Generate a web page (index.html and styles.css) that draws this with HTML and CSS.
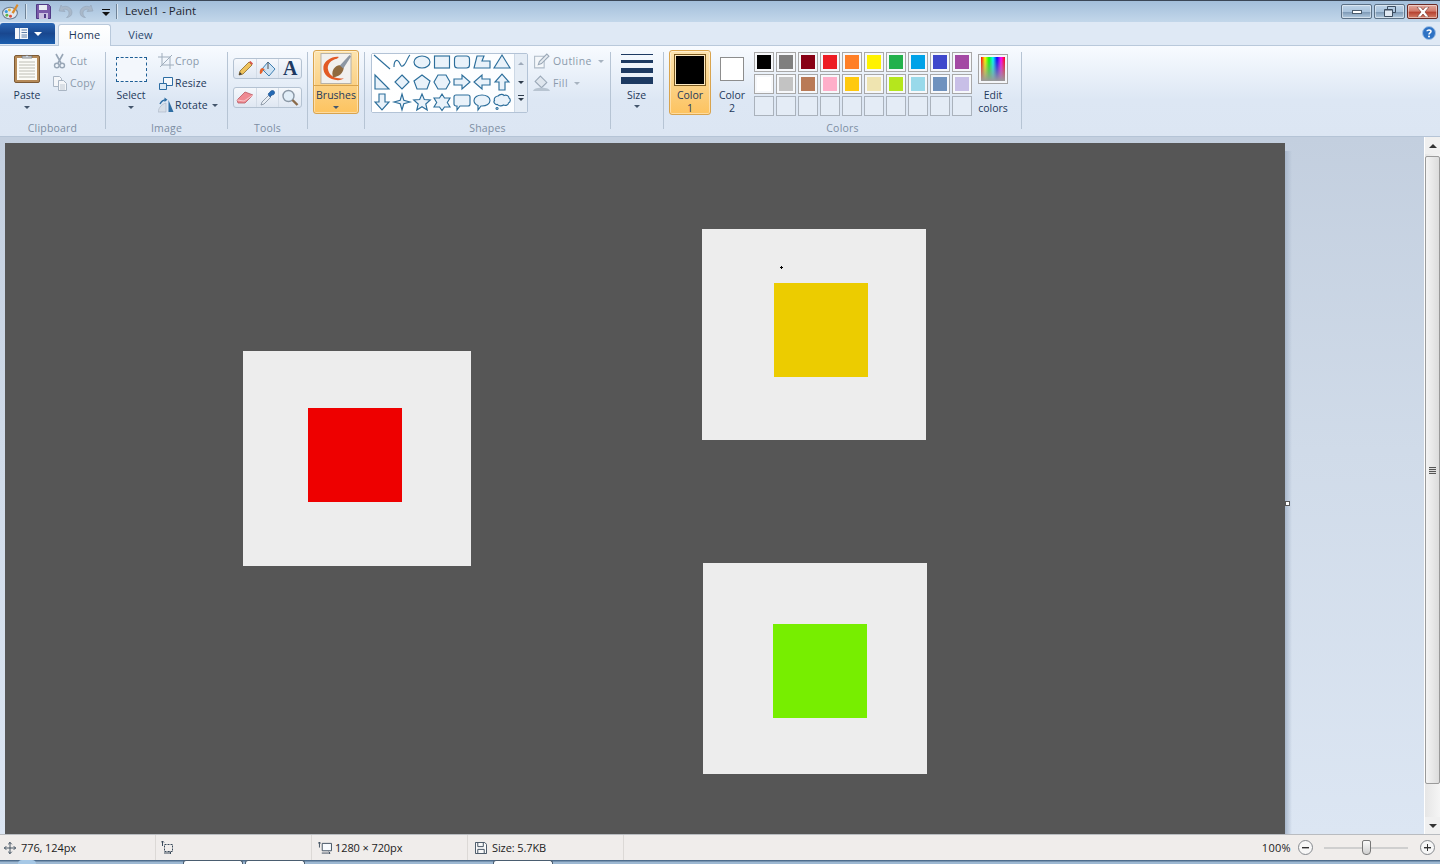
FILE: index.html
```html
<!DOCTYPE html>
<html lang="en">
<head>
<meta charset="utf-8">
<title>Level1 - Paint</title>
<link rel="stylesheet" href="styles.css">
</head>
<body>
<div class="window">
  <header class="titlebar">
    <svg class="qa qa-app" viewBox="0 0 16 16"><ellipse cx="7.500" cy="9.500" rx="7" ry="5.500" fill="#dfe6ee" stroke="#6d7f92"/><circle cx="4" cy="8" r="1.500" fill="#3a9bdc"/><circle cx="7" cy="6.600" r="1.400" fill="#e8b93a"/><circle cx="4.600" cy="11.600" r="1.400" fill="#5fb548"/><circle cx="8" cy="12.400" r="1.400" fill="#d9503f"/><path d="M9 9L14 1l1.500 1L11 10z" fill="#d98a2c"/></svg>
    <span class="qa-sep qa-sep-a"></span>
    <svg class="qa qa-save" viewBox="0 0 15 15"><path d="M.5.5h12l2 2v12H.5z" fill="#7a5aa8" stroke="#4f3a86"/><path d="M3 1h8v5H3z" fill="#e8ecf3"/><path d="M3 9h9v6H3z" fill="#c9bfe0"/><path d="M8 10h2v4H8z" fill="#4f3a86"/></svg>
    <svg class="qa qa-undo" viewBox="0 0 15 15"><path d="M3 1L1 7l6 .5L5.400 5.600C8 4.600 11 6 11 9c0 2-1 3.500-2.500 4.500 3.500 0 5.500-2.500 5.500-5C14 3.500 8 1 4.500 3z" fill="#a9b8c9" stroke="#94a5b8" stroke-width=".6"/></svg>
    <svg class="qa qa-redo" viewBox="0 0 15 15"><path d="M12 1l2 6-6 .5 1.600-1.900C7 4.600 4 6 4 9c0 2 1 3.500 2.500 4.500C3 13.500 1 11 1 8.500 1 3.500 7 1 10.500 3z" fill="#a9b8c9" stroke="#94a5b8" stroke-width=".6"/></svg>
    <svg class="qa qa-more" viewBox="0 0 8 8"><path d="M0 1h8v1H0z" fill="#111"/><path d="M0 4h8L4 8z" fill="#111"/></svg>
    <span class="qa-sep qa-sep-b"></span>
    <span class="doc-title">Level1 - Paint</span>
    <div class="winbtns">
      <button class="winbtn"><span class="glyph-min"></span></button>
      <button class="winbtn"><svg class="glyph-restore" viewBox="0 0 12 11"><path d="M3.500.5h8v6h-8z" fill="none" stroke="#3c4d60"/><path d="M.5 3.500h8v7h-8z" fill="#dfe8f2" stroke="#3c4d60"/><path d="M1 3h7v1.500H1z" fill="#3c4d60"/></svg></button>
      <button class="winbtn winbtn-close"><svg class="glyph-close" viewBox="0 0 14 10"><path d="M1 0h3.500L7 3l2.500-3H13L9 5l4 5H9.500L7 7l-2.500 3H1l4-5z" fill="#fff" stroke="#6d3028" stroke-width=".6"/></svg></button>
    </div>
  </header>

  <nav class="tabs">
    <button class="appmenu">
      <svg class="appmenu-doc" viewBox="0 0 13 11"><path d="M0 0h13v11H0z" fill="#f4f7fb"/><path d="M4 0h1v11H4z" fill="#7f9cc0"/><path d="M6.500 2H12M6.500 4.500H12M6.500 7H12M6.500 9H12" stroke="#5d7ea8"/></svg>
      <span class="appmenu-caret"></span>
    </button>
    <span class="tab tab-active">Home</span>
    <span class="tab">View</span>
    <svg class="help" viewBox="0 0 14 14"><circle cx="7" cy="7" r="6.500" fill="#2e72c4" stroke="#9fc0e6"/><path d="M5 5.200C5 3.700 9 3.500 9 5.500 9 7 7 6.800 7 8.500" fill="none" stroke="#fff" stroke-width="1.500"/><circle cx="7" cy="10.500" r="1" fill="#fff"/></svg>
  </nav>

  <section class="ribbon">
    <div class="group g-clipboard">
      <div class="body">
        <div class="bigbtn paste">
          <svg class="paste-icon" viewBox="0 0 26 30"><rect x=".5" y="2.500" width="25" height="27" rx="1.500" fill="#b58a58" stroke="#7d5a34"/><rect x="3" y="5" width="20" height="22" fill="#fbfbf7"/><path d="M5 9h16M5 12h16M5 15h16M5 18h16M5 21h16M5 24h16" stroke="#bdbdb4"/><path d="M8 5V3h3.500a2 2 0 0 1 3 0H18v2z" fill="#d8dde2" stroke="#6f7478" stroke-width=".8"/></svg>
          <span class="biglabel">Paste</span>
          <span class="caret"></span>
        </div>
        <div class="list">
          <div class="item off"><svg class="ic" viewBox="0 0 16 16"><path d="M4 1l5 9M11 1L6 10" stroke="#98a6b6" stroke-width="1.600" fill="none"/><circle cx="4.800" cy="12.500" r="2.300" fill="none" stroke="#98a6b6" stroke-width="1.400"/><circle cx="10.200" cy="12.500" r="2.300" fill="none" stroke="#98a6b6" stroke-width="1.400"/></svg><span>Cut</span></div>
          <div class="item off"><svg class="ic" viewBox="0 0 16 16"><path d="M1.500 1.500h6l2 2v8h-8z" fill="#f4f6f9" stroke="#a9b5c3"/><path d="M6.500 5.500h5l3 3v7h-8z" fill="#f4f6f9" stroke="#a9b5c3"/><path d="M8 10h5M8 12h5M8 14h5" stroke="#c0c9d3"/></svg><span>Copy</span></div>
        </div>
      </div>
      <div class="label">Clipboard</div>
    </div>

    <div class="group g-image">
      <div class="body">
        <div class="bigbtn select">
          <span class="select-icon"></span>
          <span class="biglabel">Select</span>
          <span class="caret"></span>
        </div>
        <div class="list">
          <div class="item off"><svg class="ic" viewBox="0 0 16 16"><path d="M4 0v12h12M0 4h12v12M2 14L14 2" fill="none" stroke="#9fadbc"/></svg><span>Crop</span></div>
          <div class="item"><svg class="ic" viewBox="0 0 16 16"><path d="M5.500 2.500h9v8h-9z" fill="#f4f8fc" stroke="#2d6da3"/><path d="M1.500 8.500h7v6h-7z" fill="#dceaf6" stroke="#2d6da3"/></svg><span>Resize</span></div>
          <div class="item"><svg class="ic" viewBox="0 0 16 16"><path d="M0 15C1 10 4 7 8 6v9z" fill="#d7dfe8" stroke="#a8b4c2" stroke-width=".6"/><path d="M10.500 3L15.500 15H10.500z" fill="#2d6da3"/><path d="M2 7C3.500 4 5 3 8 2.800" fill="none" stroke="#2d6da3" stroke-width="1.400"/><path d="M6.500 0.500l3 2.300-3 2.200z" fill="#2d6da3"/></svg><span>Rotate</span><span class="drop"></span></div>
        </div>
      </div>
      <div class="label">Image</div>
    </div>

    <div class="group g-tools">
      <div class="body toolrows">
        <div class="toolrow">
          <span class="tool"><svg class="ic-tool" viewBox="0 0 18 18"><path d="M4 11L13 2l3 3-9 9-4 1z" fill="#eec25c" stroke="#8d6c2c" stroke-width=".8"/><path d="M13 2l3 3 1-1.500L14.500 1z" fill="#d9574c"/><path d="M3 15l.8-3 2.200 2.200z" fill="#333"/></svg></span>
          <span class="tool"><svg class="ic-tool" viewBox="0 0 18 18"><path d="M9 2l7 7-6 7-7-7z" fill="#cfe3f4" stroke="#3f7fb0"/><path d="M9 2v7" stroke="#555"/><path d="M4 8C1 8 .5 11 1 14c1.500 0 3-2 3-4 1 0 2 0 3 1z" fill="#e4632c"/></svg></span>
          <span class="tool tool-a">A</span>
        </div>
        <div class="toolrow">
          <span class="tool"><svg class="ic-tool" viewBox="0 0 18 18"><path d="M1 11l8-8 8 3-8 8-7 0z" fill="#ef8a92" stroke="#b85a63" stroke-width=".8"/><path d="M1 11l7 1 9-6" fill="none" stroke="#f7c4c8"/></svg></span>
          <span class="tool"><svg class="ic-tool" viewBox="0 0 18 18"><path d="M2 16l1-3 7-7 2 2-7 7z" fill="#e9eef4" stroke="#7f8c9a" stroke-width=".8"/><path d="M9 5l2-2c1-2 4-2 4.500 0 .5 2-1 3-2.500 3l-2 2z" fill="#2469b4" stroke="#1c4f88" stroke-width=".6"/></svg></span>
          <span class="tool"><svg class="ic-tool" viewBox="0 0 18 18"><circle cx="7.500" cy="7" r="5.500" fill="#e2eef8" stroke="#8b98a6" stroke-width="1.400"/><path d="M11.500 11l5 5" stroke="#8a6a4a" stroke-width="2.400"/></svg></span>
        </div>
      </div>
      <div class="label">Tools</div>
    </div>

    <div class="group g-brushes">
      <div class="body">
        <div class="hot brushes">
          <div class="brushes-top">
            <svg class="brush-icon" viewBox="0 0 32 32"><rect x=".5" y=".5" width="31" height="31" fill="#f1f0ee" stroke="#b5b0a6"/><path d="M19 4C12 3 4 8 3 14c-1 8 6 14 15 14 3 0 5-1 6-2-6 1-14-1-16-8C6 12 11 7 17 6z" fill="#e25a25"/><path d="M13 25c-2-5 0-10 5-12 3-1 5 0 6 2 0 5-5 10-11 10z" fill="#8f6a3e"/><path d="M20 13L30 2l1.500 1.500L23.500 16z" fill="#8c96a2"/></svg>
          </div>
          <span class="biglabel">Brushes</span>
          <span class="caret"></span>
        </div>
      </div>
    </div>

    <div class="group g-shapes">
      <div class="body">
        <div class="gallery">
          <div class="shapes">
            <svg class="shape" viewBox="0 0 18 18"><path d="M1 2l16 14"/></svg>
            <svg class="shape" viewBox="0 0 18 18"><path d="M1 14c0-7 3-8 5-5s2 6 5 3 4-9 6-10" class="nofill"/></svg>
            <svg class="shape" viewBox="0 0 18 18"><ellipse cx="9" cy="9" rx="8" ry="6"/></svg>
            <svg class="shape" viewBox="0 0 18 18"><rect x="1.500" y="3" width="15" height="12"/></svg>
            <svg class="shape" viewBox="0 0 18 18"><rect x="1.500" y="3" width="15" height="12" rx="3"/></svg>
            <svg class="shape" viewBox="0 0 18 18"><path d="M1 15l3-12h7l-2 5h8v7z"/></svg>
            <svg class="shape" viewBox="0 0 18 18"><path d="M9 2l8 13H1z"/></svg>

            <svg class="shape" viewBox="0 0 18 18"><path d="M2 2l14 14H2z"/></svg>
            <svg class="shape" viewBox="0 0 18 18"><path d="M9 2l7 7-7 7-7-7z"/></svg>
            <svg class="shape" viewBox="0 0 18 18"><path d="M9 2l8 6-3 8H4L1 8z"/></svg>
            <svg class="shape" viewBox="0 0 18 18"><path d="M5 2h8l4 7-4 7H5L1 9z"/></svg>
            <svg class="shape" viewBox="0 0 18 18"><path d="M1 6h8V2l8 7-8 7v-4H1z"/></svg>
            <svg class="shape" viewBox="0 0 18 18"><path d="M17 6H9V2L1 9l8 7v-4h8z"/></svg>
            <svg class="shape" viewBox="0 0 18 18"><path d="M6 17V9H2l7-8 7 8h-4v8z"/></svg>

            <svg class="shape" viewBox="0 0 18 18"><path d="M6 1v8H2l7 8 7-8h-4V1z"/></svg>
            <svg class="shape" viewBox="0 0 18 18"><path d="M9 1l1.800 6.200L17 9l-6.200 1.800L9 17l-1.800-6.200L1 9l6.200-1.800z"/></svg>
            <svg class="shape" viewBox="0 0 18 18"><path d="M9 1l2.300 5.500 6 .5-4.500 4 1.400 6L9 13.800 3.800 17l1.400-6L.7 7l6-.5z"/></svg>
            <svg class="shape" viewBox="0 0 18 18"><path d="M9 1l2.500 4H17l-2.700 4.500L17 14h-5.500L9 17.500 6.500 14H1l2.700-4.500L1 5h5.500z"/></svg>
            <svg class="shape" viewBox="0 0 18 18"><path d="M3 2h12a2 2 0 0 1 2 2v7a2 2 0 0 1-2 2H7l-3 4v-4H3a2 2 0 0 1-2-2V4a2 2 0 0 1 2-2z"/></svg>
            <svg class="shape" viewBox="0 0 18 18"><path d="M9 2c4.500 0 8 2.300 8 5.500S13.500 13 9 13H8l-3 4v-4.500C2.500 11.500 1 9.700 1 7.500 1 4.300 4.500 2 9 2z"/></svg>
            <svg class="shape" viewBox="0 0 18 18"><path d="M5 3c2-2 5-2 6-.5 2-1 5 0 5 2.500 2 1 1.500 4.500-.5 5 0 2-3 3-5 2-2 1.500-5 1-6-.5C2 12 0 9 1.500 7.500.5 5 3 3 5 3zM4 14.500a1 1 0 1 0 .1 0z"/></svg>
          </div>
          <div class="gal-scroll">
            <span class="gal-up"></span>
            <span class="gal-down"></span>
            <span class="gal-more"></span>
          </div>
        </div>
        <div class="list list-shape">
          <div class="item off"><svg class="ic" viewBox="0 0 16 16"><path d="M1.500 3.500h9v11h-9z" transform="translate(0 -.5)" fill="#f4f7fa" stroke="#aebac7"/><path d="M5 11l1-3 7-7 2 2-7 7z" fill="#e6ebf1" stroke="#9aa8b7"/></svg><span>Outline</span><span class="drop drop-off"></span></div>
          <div class="item off"><svg class="ic" viewBox="0 0 16 16"><path d="M7 1l6 6-5 5-6-6z" fill="#dfe6ee" stroke="#9aa8b7"/><path d="M0 15c1-2 3-3 8-3s7 1 8 3z" fill="#b8c4d1"/></svg><span>Fill</span><span class="drop drop-off"></span></div>
        </div>
      </div>
      <div class="label">Shapes</div>
    </div>

    <div class="group g-size">
      <div class="body">
        <div class="bigbtn sizebtn">
          <div class="lines"><i class="l1"></i><i class="l2"></i><i class="l3"></i><i class="l4"></i></div>
          <span class="biglabel">Size</span>
          <span class="caret"></span>
        </div>
      </div>
    </div>

    <div class="group g-colors">
      <div class="body">
        <div class="hot colorbtn">
          <span class="chip chip-1"></span>
          <span class="biglabel two">Color<br>1</span>
        </div>
        <div class="colorbtn">
          <span class="chip chip-2"></span>
          <span class="biglabel two">Color<br>2</span>
        </div>
        <div class="palette">
          <span class="sw"><i class="c1"></i></span><span class="sw"><i class="c2"></i></span><span class="sw"><i class="c3"></i></span><span class="sw"><i class="c4"></i></span><span class="sw"><i class="c5"></i></span><span class="sw"><i class="c6"></i></span><span class="sw"><i class="c7"></i></span><span class="sw"><i class="c8"></i></span><span class="sw"><i class="c9"></i></span><span class="sw"><i class="c10"></i></span>
          <span class="sw"><i class="c11"></i></span><span class="sw"><i class="c12"></i></span><span class="sw"><i class="c13"></i></span><span class="sw"><i class="c14"></i></span><span class="sw"><i class="c15"></i></span><span class="sw"><i class="c16"></i></span><span class="sw"><i class="c17"></i></span><span class="sw"><i class="c18"></i></span><span class="sw"><i class="c19"></i></span><span class="sw"><i class="c20"></i></span>
          <span class="sw sw-e"></span><span class="sw sw-e"></span><span class="sw sw-e"></span><span class="sw sw-e"></span><span class="sw sw-e"></span><span class="sw sw-e"></span><span class="sw sw-e"></span><span class="sw sw-e"></span><span class="sw sw-e"></span><span class="sw sw-e"></span>
        </div>
        <div class="editcolors">
          <span class="rainbow"></span>
          <span class="biglabel two">Edit<br>colors</span>
        </div>
      </div>
      <div class="label">Colors</div>
    </div>
  </section>

  <main class="work">
    <div class="canvas-area">
      <div class="canvas">
        <div class="card card-a"></div>
        <div class="square sq-red"></div>
        <div class="card card-b"></div>
        <div class="square sq-yellow"></div>
        <div class="cursor-dot"></div>
        <div class="card card-c"></div>
        <div class="square sq-green"></div>
      </div>
      <span class="canvas-shadow"></span>
      <span class="handle"></span>
    </div>
    <aside class="scrollbar">
      <span class="sb-btn"><i class="arrow-up"></i></span>
      <span class="sb-thumb"><i class="grip"></i></span>
      <span class="sb-btn"><i class="arrow-down"></i></span>
    </aside>
  </main>

  <footer class="status">
    <div class="cell"><svg class="ic-status" viewBox="0 0 13 13"><path d="M6.500 0v13M0 6.500h13" stroke="#3a4a5a" fill="none"/><path d="M4.500 2.500l2-2 2 2M4.500 10.500l2 2 2-2M2.500 4.500l-2 2 2 2M10.500 4.500l2 2-2 2" stroke="#3a4a5a" fill="none"/></svg><span>776, 124px</span></div>
    <div class="cell"><svg class="ic-status ic-sel" viewBox="0 0 14 13"><path d="M3.500 3.500h8v7h-8z" fill="none" stroke="#3a4a5a" stroke-dasharray="2 1"/><path d="M1.500 0v5M0 1.500l1.500-1.500 1.500 1.500M3 12h7M8.500 10.500L10 12l-1.500 1.500" stroke="#3a4a5a" fill="none"/></svg></div>
    <div class="cell"><svg class="ic-status ic-wide" viewBox="0 0 15 13"><path d="M4.500 1.500h10v8h-10z" fill="#f8fbfe" stroke="#3a4a5a"/><path d="M1.500 0v6M0 1.500L1.500 0 3 1.500M4 12h9M11.500 10.500L13 12l-1.500 1.500" stroke="#3a4a5a" fill="none"/></svg><span>1280 × 720px</span></div>
    <div class="cell"><svg class="ic-status" viewBox="0 0 13 13"><path d="M.5.500h10l2 2v10H.5z" fill="#f8f8f8" stroke="#3a4a5a"/><path d="M3 1v4h6V1M3 12V8h7v4" fill="none" stroke="#3a4a5a"/></svg><span>Size: 5.7KB</span></div>
    <div class="cell cell-last"></div>
    <div class="zoom">
      <span class="zoom-val">100%</span>
      <span class="zoom-btn"><i class="minus"></i></span>
      <span class="slider"><i class="slider-thumb"></i></span>
      <span class="zoom-btn"><i class="minus"></i><i class="plusv"></i></span>
    </div>
  </footer>

  <div class="taskbar">
    <span class="orb"></span>
    <span class="tb tb-1"></span>
    <span class="tb tb-2"></span>
    <span class="tb tb-3"></span>
  </div>
</div>
</body>
</html>
```

FILE: styles.css
```css
* { box-sizing: border-box; }
html, body { margin: 0; padding: 0; height: 100%; overflow: hidden; }
body { font-family: "Open Sans", "Noto Sans", sans-serif; font-size: 11px; color: #1e395b; }
button { padding: 0; margin: 0; font: inherit; }

.window { width: 1440px; height: 864px; display: flex; flex-direction: column; overflow: hidden; }

/* title bar */
.titlebar { height: 22px; flex: none; display: flex; align-items: center; border-top: 1px solid #3b4757; background: linear-gradient(#a3bfdb, #c3d7ea); }
.qa { display: block; flex: none; }
.qa-app { width: 17px; height: 17px; margin-left: 2px; }
.qa-sep { width: 1px; height: 15px; background: #6f8296; box-shadow: 1px 0 0 #dbe7f2; flex: none; }
.qa-sep-a { margin-left: 6px; }
.qa-save { width: 15px; height: 15px; margin-left: 10px; }
.qa-undo { width: 15px; height: 15px; margin-left: 7px; }
.qa-redo { width: 15px; height: 15px; margin-left: 6px; }
.qa-more { width: 8px; height: 8px; margin-left: 8px; }
.qa-sep-b { margin-left: 6px; }
.doc-title { margin-left: 8px; margin-top: -2px; font-size: 11.500px; color: #1c2530; line-height: 20px; }
.winbtns { margin-left: auto; margin-right: 2px; display: flex; gap: 2px; }
.winbtn { width: 31px; height: 15px; display: flex; align-items: center; justify-content: center; border: 1px solid #5c7186; border-radius: 2px; background: linear-gradient(#bed3e7 0, #a9c3dc 50%, #7e9ab6 55%, #b3cbe0 100%); box-shadow: inset 0 0 0 1px rgba(255,255,255,.45); }
.winbtn-close { border-color: #6a2a25; background: linear-gradient(#e0a99e 0, #d27a6a 48%, #b5402f 54%, #d47f68 100%); }
.glyph-min { width: 10px; height: 4px; background: #fff; border: 1px solid #4a5b6c; }
.glyph-restore { width: 12px; height: 11px; display: block; }
.glyph-close { width: 14px; height: 10px; display: block; }

/* tabs */
.tabs { height: 24px; flex: none; display: flex; align-items: flex-end; background: #dfe9f5; border-bottom: 1px solid #b9c9db; position: relative; }
.appmenu { width: 55px; height: 21px; margin-bottom: 1px; border: none; border-radius: 3px 3px 0 0; background: linear-gradient(#2a66b4 0, #19478f 50%, #1c5fae 100%); display: flex; align-items: center; justify-content: center; gap: 6px; padding-left: 2px; }
.appmenu-doc { width: 13px; height: 11px; display: block; }
.appmenu-caret { width: 0; height: 0; border: 4px solid transparent; border-top: 4px solid #fff; border-bottom: 0; }
.tab { height: 22px; width: 53px; margin-left: 3px; display: flex; align-items: center; justify-content: center; font-size: 11px; color: #2c4a70; letter-spacing: .1px; }
.tab-active { position: relative; top: 1px; padding-bottom: 2px; background: linear-gradient(#fff, #f7fafd); border: 1px solid #b9c9db; border-bottom: none; border-radius: 3px 3px 0 0; color: #1e395b; }
.help { position: absolute; right: 4px; top: 4px; width: 14px; height: 14px; }

/* ribbon */
.ribbon { height: 91px; flex: none; display: flex; padding-top: 4px; background: linear-gradient(#f8fbff 0, #dde7f4 60%, #dce6f3 100%); border-bottom: 1px solid #b5c4d6; }
.group { position: relative; flex: none; display: flex; flex-direction: column; }
.group::after { content: ""; position: absolute; right: 0; top: 2px; bottom: 7px; width: 1px; background: #b6c4d4; }
.body { height: 66px; display: flex; }
.label { margin-top: 5px; height: 14px; line-height: 14px; font-size: 10.500px; text-align: center; color: #7c8ea3; letter-spacing: .2px; padding-right: 1px; }
.g-clipboard { width: 106px; }
.g-clipboard .body { padding-left: 8px; gap: 6px; }
.g-image { width: 122px; }
.g-image .body { padding-left: 8px; gap: 10px; }
.g-image .item { gap: 1px; letter-spacing: .15px; }
.g-tools { width: 80px; }
.g-brushes { width: 57px; }
.g-shapes { width: 246px; }
.g-size { width: 53px; }
.g-colors { width: 358px; }

.bigbtn { display: flex; flex-direction: column; align-items: center; }
.biglabel { font-size: 10.500px; line-height: 13px; color: #1e395b; text-align: center; }
.two { line-height: 13px; }
.caret { display: block; width: 0; height: 0; margin-top: 4px; border: 3px solid transparent; border-top: 3px solid #44566c; border-bottom: 0; }
.paste { width: 38px; }
.paste-icon { width: 26px; height: 30px; margin-top: 3px; margin-bottom: 6px; display: block; }
.select { width: 34px; }
.select-icon { display: block; width: 31px; height: 25px; margin-top: 7px; margin-bottom: 7px; border: 1px dashed #1f5f96; background: #f3f7fc; }
.list { display: flex; flex-direction: column; }
.item { height: 22px; display: flex; align-items: center; gap: 2px; font-size: 10.500px; white-space: nowrap; color: #1e395b; letter-spacing: .15px; }
.item.off { color: #8b9aab; }
.ic { width: 16px; height: 16px; display: block; flex: none; }
.drop { width: 0; height: 0; margin-left: 3px; border: 3px solid transparent; border-top: 3px solid #44566c; border-bottom: 0; }
.drop-off { border-top-color: #a7b3c0; }

/* tools */
.toolrows { flex-direction: column; gap: 8px; padding: 8px 0 0 5px; }
.toolrow { width: 69px; height: 21px; display: flex; border: 1px solid #b4c2d2; border-radius: 3px; background: linear-gradient(#f5f8fc, #dfe7f2); }
.tool { flex: 1; display: flex; align-items: center; justify-content: center; border-right: 1px solid #d3dce7; }
.tool:last-child { border-right: none; }
.ic-tool { width: 18px; height: 18px; display: block; }
.tool-a { font-family: "Liberation Serif", serif; font-weight: 700; font-size: 20px; line-height: 19px; color: #1d3a62; }

/* brushes & hot */
.g-brushes .body { padding-left: 5px; }
.hot { border: 1px solid #d9a44e; border-radius: 3px; background: linear-gradient(#fde4ae 0, #fbd389 50%, #fdc35f 100%); box-shadow: inset 0 0 0 1px rgba(255,255,255,.4); display: flex; flex-direction: column; align-items: center; }
.brushes { width: 46px; height: 64px; }
.brushes-top { width: 100%; height: 35px; display: flex; justify-content: center; align-items: center; border-bottom: 1px solid #d9a44e; }
.brush-icon { width: 32px; height: 31px; display: block; }
.brushes .biglabel { margin-top: 3px; }

/* shapes */
.g-shapes .body { padding: 3px 0 0 6px; gap: 6px; }
.gallery { width: 157px; height: 60px; display: flex; border: 1px solid #b3c3d6; border-radius: 2px; background: #f1f5fa; }
.shapes { width: 142px; display: grid; grid-template-columns: repeat(7, 20px); grid-auto-rows: 20px; align-content: start; justify-content: start; background: linear-gradient(90deg, #fff, #fbfdff); }
.shape { width: 18px; height: 18px; margin: -1px 1px 0 1px; fill: #e9f2fa; stroke: #2c6e9b; stroke-width: 1.150; display: block; overflow: visible; }
.shape .nofill { fill: none; }
.gal-scroll { flex: 1; display: flex; flex-direction: column; align-items: center; border-left: 1px solid #ccd8e5; background: #e4ecf5; }
.gal-up, .gal-down, .gal-more { display: block; width: 0; height: 0; border: 3px solid transparent; border-bottom: 0; }
.gal-up { margin-top: 8px; border-top: 0; border-bottom: 3px solid #9eaaba; }
.gal-down { margin-top: 16px; border-top: 3px solid #2e3c4c; }
.gal-more { margin-top: 14px; border-top: 3px solid #2e3c4c; position: relative; }
.gal-more::before { content: ""; position: absolute; left: -3px; top: -6px; width: 6px; height: 1px; background: #2e3c4c; }
.list-shape { margin-top: -3px; margin-left: -1px; }
.list-shape .item { gap: 3px; letter-spacing: .4px; }
.list-shape .ic { width: 17px; height: 17px; }

/* size */
.sizebtn { width: 51px; }
.lines { width: 32px; margin-top: 4px; margin-bottom: 5px; display: flex; flex-direction: column; }
.lines i { display: block; background: #1d3a62; }
.l1 { height: 1px; }
.l2 { height: 3px; margin-top: 5px; }
.l3 { height: 5px; margin-top: 5px; }
.l4 { height: 7px; margin-top: 4px; }
.sizebtn .caret { margin-top: 3px; }

/* colors */
.g-colors .body { padding-left: 5px; }
.colorbtn { width: 42px; height: 65px; display: flex; flex-direction: column; align-items: center; }
.chip { display: block; flex: none; }
.chip-1 { width: 32px; height: 32px; margin-top: 3px; margin-bottom: 3px; border: 1px solid #7a5a20; background: #000; box-shadow: 0 0 0 1px #fde9c0 inset; }
.chip-2 { width: 24px; height: 24px; margin-top: 7px; margin-bottom: 8px; border: 1px solid #8d8d8d; background: #fff; }
.palette { margin-left: 1px; margin-top: 2px; display: grid; grid-template-columns: repeat(10, 20px); grid-auto-rows: 20px; gap: 2px; align-content: start; }
.sw { display: block; padding: 2px; border: 1px solid #a8a8a8; background: #f6f8fb; }
.sw i { display: block; width: 100%; height: 100%; }
.sw-e { background: #e4ecf6; border-color: #aab2bc; }
.c1 { background: #000; } .c2 { background: #7f7f7f; } .c3 { background: #880015; } .c4 { background: #ed1c24; } .c5 { background: #ff7f27; }
.c6 { background: #fff200; } .c7 { background: #22b14c; } .c8 { background: #00a2e8; } .c9 { background: #3f48cc; } .c10 { background: #a349a4; }
.c11 { background: #fff; } .c12 { background: #c3c3c3; } .c13 { background: #b97a57; } .c14 { background: #ffaec9; } .c15 { background: #ffc90e; }
.c16 { background: #efe4b0; } .c17 { background: #b5e61d; } .c18 { background: #99d9ea; } .c19 { background: #7092be; } .c20 { background: #c8bfe7; }
.editcolors { margin-left: 6px; width: 30px; display: flex; flex-direction: column; align-items: center; }
.rainbow { display: block; width: 28px; height: 28px; margin-top: 5px; margin-bottom: 6px; border: 2px solid #f4f6f9; outline: 1px solid #a3a3a3; background: linear-gradient(transparent, #9a9a9a), linear-gradient(90deg, #f00, #ff0, #0f0, #0ff, #00f, #f0f, #f00); }

/* work area */
.work { flex: 1; min-height: 0; display: flex; background: linear-gradient(#c3cfdf 0, #d0dbe9 45%, #dce6f3 100%); }
.canvas-area { flex: 1; position: relative; padding: 6px 0 0 5px; overflow: hidden; }
.canvas { width: 1280px; height: 720px; position: relative; background: #565656; }
.canvas-shadow { position: absolute; left: 1285px; top: 14px; width: 7px; height: 720px; background: linear-gradient(90deg, #a9b8cc, rgba(169,184,204,0)); }
.handle { position: absolute; left: 1285px; top: 364px; width: 5px; height: 5px; background: #fff; border: 1px solid #555; }
.card { position: absolute; background: #ededed; }
.card-a { left: 238px; top: 208px; width: 228px; height: 215px; }
.card-b { left: 697px; top: 86px; width: 224px; height: 211px; }
.card-c { left: 698px; top: 420px; width: 224px; height: 211px; }
.square { position: absolute; width: 94px; height: 94px; }
.sq-red { left: 302.500px; top: 264.500px; background: #ee0000; }
.sq-yellow { left: 768.500px; top: 139.500px; background: #eccc00; }
.sq-green { left: 767.500px; top: 480.500px; background: #77ee00; }
.cursor-dot { position: absolute; left: 775px; top: 123px; width: 3px; height: 3px; z-index: 1; background: linear-gradient(#000, #000) center / 1px 3px no-repeat, linear-gradient(#000, #000) center / 3px 1px no-repeat; }
.scrollbar { width: 16px; flex: none; display: flex; flex-direction: column; background: linear-gradient(90deg, #e6e6e6, #f5f5f5); border-left: 1px solid #fff; }
.sb-btn { height: 17px; flex: none; display: flex; align-items: center; justify-content: center; background: #f0f0f0; }
.arrow-up { width: 0; height: 0; border: 4px solid transparent; border-top: 0; border-bottom: 4px solid #333; }
.arrow-down { width: 0; height: 0; border: 4px solid transparent; border-bottom: 0; border-top: 4px solid #333; }
.sb-thumb { flex: 1; display: flex; align-items: center; justify-content: center; margin: 2px 0 33px; border: 1px solid #9a9a9a; border-radius: 2px; background: linear-gradient(90deg, #f4f4f4, #dcdcdc); }
.grip { display: block; width: 7px; height: 7px; background: repeating-linear-gradient(#555 0, #555 1px, #ddd 1px, #ddd 2px); }

/* status */
.status { height: 26px; flex: none; display: flex; align-items: center; background: #f0edeb; border-top: 1px solid #b9bcc0; font-size: 11px; color: #1c1c1c; font-family: "Open Sans", sans-serif; }
.cell { width: 156px; height: 100%; flex: none; display: flex; align-items: center; gap: 5px; padding-left: 4px; border-right: 1px solid #dcd9d6; white-space: nowrap; letter-spacing: -.1px; }
.ic-status { width: 12px; height: 12px; display: block; flex: none; }
.ic-sel { width: 14px; height: 13px; }
.ic-wide { width: 14px; height: 12px; }
.cell:nth-child(2) { padding-left: 5px; }
.cell:nth-child(3) { padding-left: 6px; gap: 3px; }
.cell:nth-child(4) { padding-left: 7px; gap: 5px; }
.cell-last { width: 624px; border-right: none; }
.zoom { flex: 1; display: flex; align-items: center; }
.zoom-val { width: 45px; margin-left: -2px; margin-right: 1px; text-align: right; letter-spacing: .3px; }
.zoom-btn { width: 15px; height: 15px; margin-left: 6px; flex: none; position: relative; border: 1px solid #85898e; border-radius: 50%; background: #f7f7f7; }
.minus { position: absolute; left: 3px; top: 6px; width: 7px; height: 1px; background: #333; box-shadow: 0 1px 0 #aaa; }
.plusv { position: absolute; left: 6px; top: 3px; width: 1px; height: 7px; background: #333; }
.slider { width: 84px; height: 2px; margin-left: 11px; margin-right: 6px; position: relative; background: #cfcfcf; flex: none; }
.slider-thumb { position: absolute; left: 38px; top: -7px; width: 9px; height: 15px; border: 1px solid #777; border-radius: 2px 2px 4px 4px; background: linear-gradient(#fafafa, #d0d0d0); }

/* strip */
.taskbar { height: 4px; flex: none; position: relative; background: linear-gradient(#39597a, #9db8d2 60%); }
.orb { position: absolute; left: 18px; top: 0; width: 18px; height: 4px; background: #a6c8e6; border-radius: 9px 9px 0 0; }
.tb { position: absolute; top: 0; width: 60px; height: 4px; background: #fff; border: 1px solid #4a5d70; border-bottom: 0; border-radius: 3px 3px 0 0; }
.tb-1 { left: 183px; }
.tb-2 { left: 245px; }
.tb-3 { left: 493px; }
```
